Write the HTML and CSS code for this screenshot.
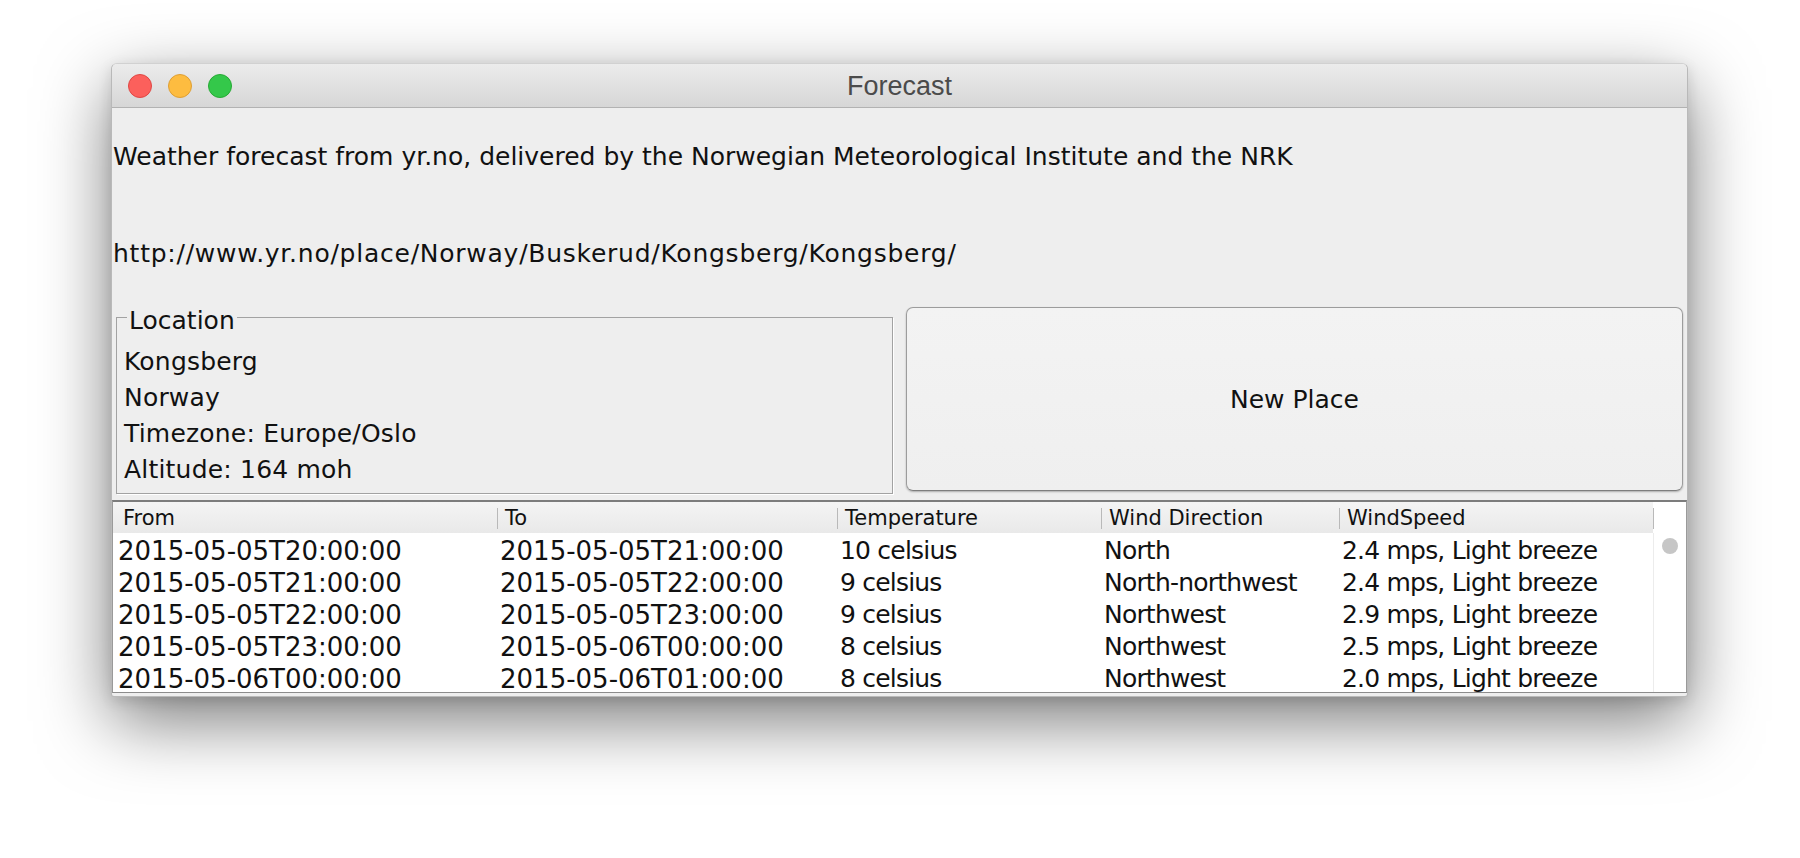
FILE: index.html
```html
<!DOCTYPE html>
<html>
<head>
<meta charset="utf-8">
<title>Forecast</title>
<link rel="stylesheet" href="styles.css">
</head>
<body>
<div class="window">
  <div class="titlebar">
    <div class="lights">
      <span class="light red"></span>
      <span class="light yellow"></span>
      <span class="light green"></span>
    </div>
    <div class="title">Forecast</div>
    <div class="spacer"></div>
  </div>
  <div class="content">
    <div class="info">Weather forecast from yr.no, delivered by the Norwegian Meteorological Institute and the NRK</div>
    <div class="info url">http://www.yr.no/place/Norway/Buskerud/Kongsberg/Kongsberg/</div>
    <div class="controls">
      <fieldset class="location">
        <legend>Location</legend>
        <div class="loc-line">Kongsberg</div>
        <div class="loc-line">Norway</div>
        <div class="loc-line">Timezone: Europe/Oslo</div>
        <div class="loc-line">Altitude: 164 moh</div>
      </fieldset>
      <button class="new-place">New Place</button>
    </div>
    <div class="table">
      <div class="thead">
        <div class="th first">From</div>
        <div class="th">To</div>
        <div class="th">Temperature</div>
        <div class="th">Wind Direction</div>
        <div class="th">WindSpeed</div>
        <div class="th th-end"></div>
      </div>
      <div class="tbody">
        <div class="rows">
          <div class="td date first">2015-05-05T20:00:00</div><div class="td date">2015-05-05T21:00:00</div><div class="td">10 celsius</div><div class="td">North</div><div class="td">2.4 mps, Light breeze</div>
          <div class="td date first">2015-05-05T21:00:00</div><div class="td date">2015-05-05T22:00:00</div><div class="td">9 celsius</div><div class="td">North-northwest</div><div class="td">2.4 mps, Light breeze</div>
          <div class="td date first">2015-05-05T22:00:00</div><div class="td date">2015-05-05T23:00:00</div><div class="td">9 celsius</div><div class="td">Northwest</div><div class="td">2.9 mps, Light breeze</div>
          <div class="td date first">2015-05-05T23:00:00</div><div class="td date">2015-05-06T00:00:00</div><div class="td">8 celsius</div><div class="td">Northwest</div><div class="td">2.5 mps, Light breeze</div>
          <div class="td date first">2015-05-06T00:00:00</div><div class="td date">2015-05-06T01:00:00</div><div class="td">8 celsius</div><div class="td">Northwest</div><div class="td">2.0 mps, Light breeze</div>
        </div>
        <div class="vscroll"><span class="knob"></span></div>
      </div>
    </div>
  </div>
</div>
</body>
</html>
```

FILE: styles.css
```css
html, body {
  margin: 0;
  padding: 0;
  background: #ffffff;
}

body {
  width: 1800px;
  height: 858px;
  overflow: hidden;
  padding: 63px 0 0 111px;
  box-sizing: border-box;
  font-family: "DejaVu Sans", "Liberation Sans", sans-serif;
  color: #111;
}

.window {
  width: 1577px;
  height: 634px;
  box-sizing: border-box;
  border: 1px solid rgba(0, 0, 0, 0.22);
  border-top-color: rgba(0, 0, 0, 0.12);
  border-radius: 6px 6px 3px 3px;
  background: #eeeeee;
  box-shadow: 0 24px 70px rgba(0, 0, 0, 0.52), 0 4px 14px rgba(0, 0, 0, 0.12);
  display: flex;
  flex-direction: column;
  overflow: hidden;
}

/* ---------- title bar ---------- */
.titlebar {
  height: 43px;
  flex: none;
  display: grid;
  grid-template-columns: 1fr auto 1fr;
  align-items: center;
  background: linear-gradient(#ececec, #d6d6d6);
  border-bottom: 1px solid #b2b2b2;
}

.lights {
  display: flex;
  gap: 16px;
  padding-left: 16px;
}

.light {
  width: 24px;
  height: 24px;
  border-radius: 50%;
  box-sizing: border-box;
}

.red { background: #fc605c; border: 1px solid #df4744; }
.yellow { background: #fdbc40; border: 1px solid #de9f34; }
.green { background: #34c84a; border: 1px solid #27aa35; }

.title {
  font-family: "Liberation Sans", "DejaVu Sans", sans-serif;
  font-size: 27px;
  color: #4b4b4b;
  padding-top: 1px;
}

/* ---------- content ---------- */
.content {
  flex: 1;
  display: flex;
  flex-direction: column;
  padding-top: 33px;
}

.info {
  font-size: 25px;
  line-height: 32px;
  height: 32px;
  padding-left: 1px;
  white-space: nowrap;
}

.url {
  margin-top: 65px;
  letter-spacing: 0.75px;
}

.controls {
  margin-top: 37px;
  height: 187px;
  display: grid;
  grid-template-columns: 1fr 1fr;
  gap: 13px;
  padding: 0 4px;
}

.location {
  margin: 0;
  min-width: 0;
  padding: 16px 7px 2px 7px;
  border: 1px solid #a2a2a2;
  box-shadow: 1px 1px 0 #ffffff;
  font-size: 25px;
}

.location legend {
  margin-left: 3px;
  padding: 6px 2px 0 2px;
  line-height: 15px;
  font-size: 25px;
}

.loc-line {
  line-height: 36px;
  height: 36px;
  white-space: nowrap;
  letter-spacing: 0.2px;
}

.new-place {
  margin: 0 0 3px 0;
  font-family: inherit;
  font-size: 25px;
  color: #111;
  background: linear-gradient(#f3f3f3, #efefef);
  border: 1px solid #9c9c9c;
  border-bottom-color: #7e7e7e;
  border-radius: 7px;
  box-shadow: 0 1px 2px rgba(0, 0, 0, 0.28);
  padding: 0;
}

/* ---------- table ---------- */
.table {
  margin-top: 6px;
  border-top: 2px solid #7c7c7c;
  border-left: 1px solid #9a9a9a;
  border-right: 1px solid #9a9a9a;
  border-bottom: 1px solid #8c8c8c;
  background: #ffffff;
}

.thead,
.rows {
  display: grid;
  grid-template-columns: 384px 340px 264px 238px 314px;
}

.thead {
  grid-template-columns: 384px 340px 264px 238px 314px 33px;
  height: 31px;
  background: linear-gradient(#f4f4f4, #e9e9e9);
}

.th {
  font-size: 21px;
  line-height: 32px;
  padding: 0 0 0 8px;
  white-space: nowrap;
  color: #111;
  background: linear-gradient(#b9b9b9, #b9b9b9) left 6px / 1px 21px no-repeat;
}

.th.first {
  padding-left: 10px;
  background: none;
}

.th-end {
  background: #ffffff linear-gradient(#b9b9b9, #b9b9b9) left 6px / 1px 21px no-repeat;
}

.tbody {
  height: 159px;
  display: flex;
  overflow: hidden;
}

.rows {
  flex: none;
  grid-auto-rows: 32px;
}

.td {
  font-size: 25px;
  line-height: 30px;
  padding: 3px 0 0 3px;
  box-sizing: border-box;
  height: 32px;
  white-space: nowrap;
  letter-spacing: -0.8px;
}

.td.date {
  font-size: 26px;
  letter-spacing: 0;
}

.td.first {
  padding-left: 5px;
}

.vscroll {
  flex: 1;
  border-left: 1px solid #ececec;
  display: flex;
  justify-content: center;
  padding-top: 5px;
}

.knob {
  width: 16px;
  height: 16px;
  border-radius: 50%;
  background: #c6c6c6;
}
```
